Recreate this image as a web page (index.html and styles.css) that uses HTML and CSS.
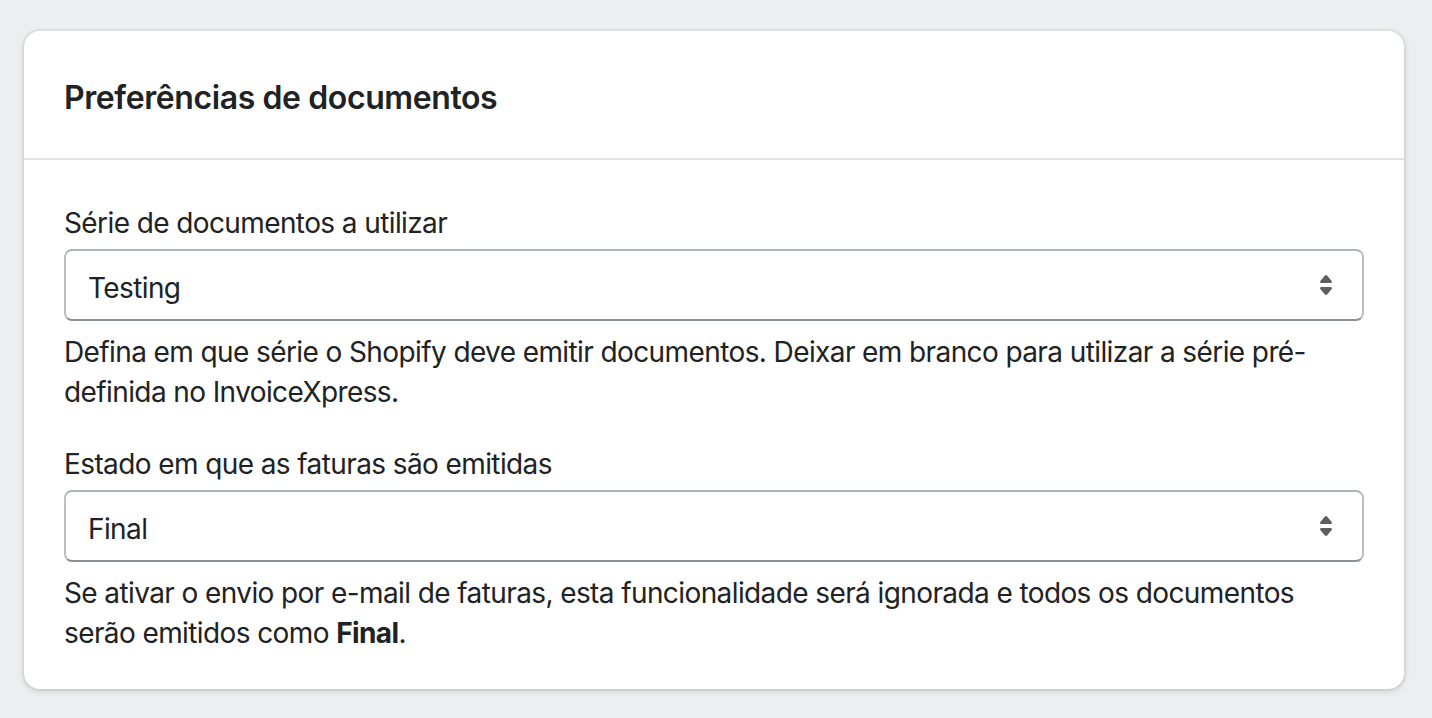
FILE: index.html
```html
<!DOCTYPE html>
<html lang="pt">
<head>
<meta charset="utf-8">
<title>Preferências de documentos</title>
<link rel="stylesheet" href="styles.css">
</head>
<body>
<div class="page">
  <section class="card">
    <header class="card-header">
      <h2 class="card-title">Preferências de documentos</h2>
    </header>
    <div class="card-section">
      <div class="field">
        <label class="label">Série de documentos a utilizar</label>
        <div class="select">
          <span class="select-value">Testing</span>
          <svg class="select-icon" viewBox="0 0 20 20" aria-hidden="true"><path d="M7.676 9h4.648c.563 0 .879-.603.53-1.014l-2.323-2.746a.708.708 0 0 0-1.062 0l-2.324 2.746c-.347.411-.032 1.014.531 1.014Zm4.648 2h-4.648c-.563 0-.878.603-.53 1.014l2.323 2.746c.27.319.792.319 1.062 0l2.323-2.746c.349-.411.033-1.014-.53-1.014Z"/></svg>
        </div>
        <p class="help">Defina em que série o Shopify deve emitir documentos. Deixar em branco para utilizar a série pré-definida no InvoiceXpress.</p>
      </div>
      <div class="field">
        <label class="label">Estado em que as faturas são emitidas</label>
        <div class="select">
          <span class="select-value">Final</span>
          <svg class="select-icon" viewBox="0 0 20 20" aria-hidden="true"><path d="M7.676 9h4.648c.563 0 .879-.603.53-1.014l-2.323-2.746a.708.708 0 0 0-1.062 0l-2.324 2.746c-.347.411-.032 1.014.531 1.014Zm4.648 2h-4.648c-.563 0-.878.603-.53 1.014l2.323 2.746c.27.319.792.319 1.062 0l2.323-2.746c.349-.411.033-1.014-.53-1.014Z"/></svg>
        </div>
        <p class="help">Se ativar o envio por e-mail de faturas, esta funcionalidade será ignorada e todos os documentos serão emitidos como <strong>Final</strong>.</p>
      </div>
    </div>
  </section>
</div>
</body>
</html>
```

FILE: styles.css
```css
* { box-sizing: border-box; }
html, body {
  margin: 0;
  background: #edeef0;
}
body {
  font-family: Inter, "Noto Sans", "Liberation Sans", sans-serif;
  color: #202223;
  font-size: 28px;
  line-height: 40px;
  letter-spacing: -0.6px;
}
.page {
  padding: 31px 28px 29px 24px;
}
.card {
  background: #ffffff;
  border-radius: 16px;
  box-shadow: 0 0 0 2px rgba(63, 63, 68, 0.05), 0 2px 6px rgba(63, 63, 68, 0.18);
}
.card-header {
  padding: 43px 40px 36px;
  border-bottom: 2px solid #e1e3e5;
}
.card-title {
  margin: 0;
  font-size: 32px;
  line-height: 48px;
  font-weight: 600;
  letter-spacing: -0.4px;
}
.card-section {
  padding: 43px 40px 36px;
  display: flex;
  flex-direction: column;
  gap: 32px;
}
.field {
  display: flex;
  flex-direction: column;
}
.label {
  display: block;
  margin-bottom: 6px;
}
.select {
  display: flex;
  align-items: center;
  justify-content: space-between;
  height: 72px;
  padding: 0 16px 0 22px;
  border: 2px solid #babfc3;
  border-top-color: #aeb4b9;
  border-bottom-color: #8c9196;
  border-radius: 8px;
  background: #ffffff;
}
.select-value {
  line-height: 40px;
  padding-top: 6px;
}
.select-icon {
  width: 40px;
  height: 40px;
  fill: #5c5f62;
  flex: none;
}
.help {
  margin: 11px 0 0;
  color: #202223;
}
.help strong {
  font-weight: 700;
}
```
